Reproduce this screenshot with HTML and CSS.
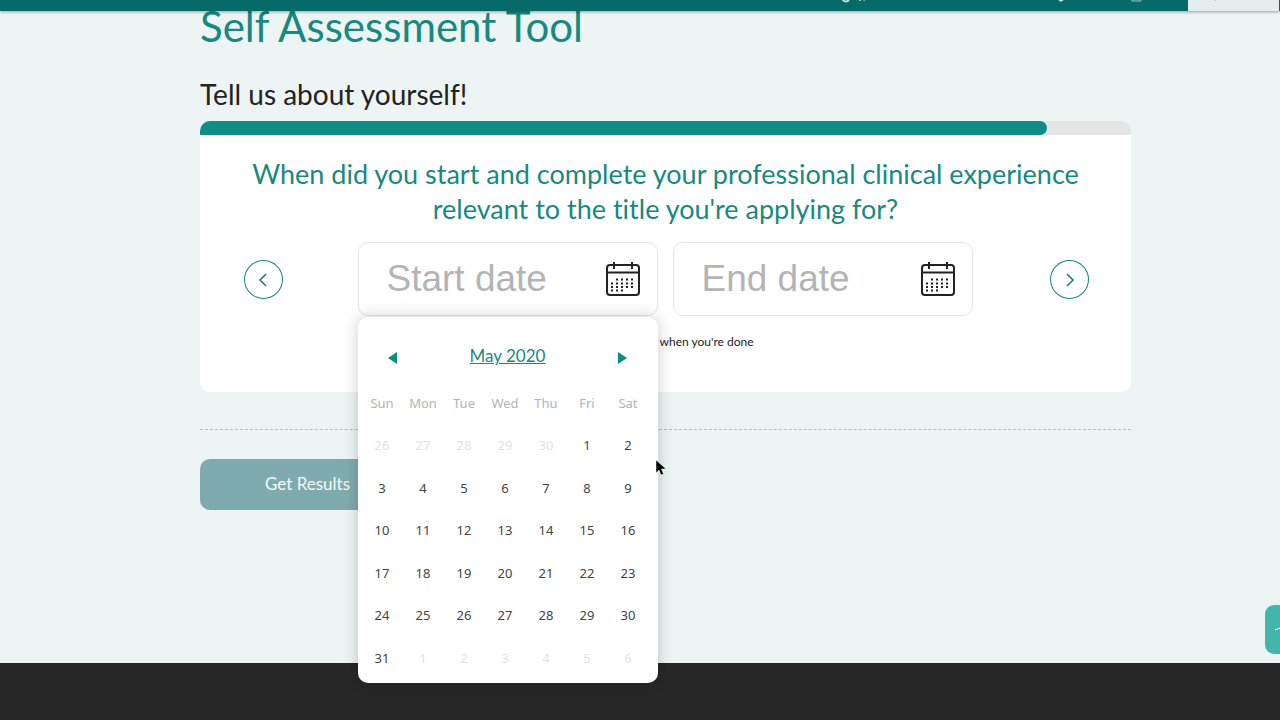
FILE: index.html
```
<!DOCTYPE html>
<html lang="en">
<head>
    <meta charset="UTF-8">
    <meta name="viewport" content="width=device-width, initial-scale=1.0">
    <title>Self Assessment Tool</title>
    <link rel="stylesheet" href="styles.css">
</head>
<body>

    <header class="topbar">
        <svg class="topbar-icons" width="340" height="11" viewBox="0 0 340 11" aria-hidden="true">
            <path d="M2 -3a4 4 0 0 0 7 3" fill="none" stroke="#c5dedc" stroke-width="2"/>
            <path d="M20 -2v3M23 -1l2 1" fill="none" stroke="#9cc8c4" stroke-width="2"/>
            <circle cx="221" cy="-1" r="2.500" fill="#d5ebe9"/>
            <path d="M292 -4v5h9v-5M294 -1h5" fill="none" stroke="#9cc8c4"/>
        </svg>
        <div class="topbar-search">
            <svg width="91" height="11" viewBox="0 0 91 11" aria-hidden="true">
                <path d="M27 -2l1 2" fill="none" stroke="#333" stroke-width="2"/>
            </svg>
        </div>
    </header>

    <main class="page">
        <h1>Self Assessment Tool</h1>
        <h2>Tell us about yourself!</h2>

        <section class="card">
            <div class="progress">
                <div class="progress-bar" style="width: 91%"></div>
            </div>

            <h3>When did you start and complete your professional clinical experience relevant to the title you're applying for?</h3>

            <div class="question">
                <button type="button" class="arrow" aria-label="Previous">
                    <svg width="39" height="39" viewBox="0 0 39 39"><path d="M22 14l-6 6 6 6"/></svg>
                </button>

                <div class="dates">
                    <div class="field">
                        <input type="text" id="startDate" placeholder="Start date" aria-label="Start date">
                        <svg class="calendar-icon" width="34" height="34" viewBox="0 0 34 34" aria-hidden="true">
                            <rect x="1" y="3" width="32" height="30" rx="3"/>
                            <path d="M1 10.500h32M8 0v7M26 0v7"/>
                            <path class="dots" d="M10 17.500h19M5 21.500h24M5 25h24M5 28.500h14"/>
                        </svg>

                        <div class="datepicker">
                            <div class="datepicker-head">
                                <button type="button" aria-label="Previous month"><svg width="9" height="12" viewBox="0 0 9 12"><path d="M9 0v12L0 6z"/></svg></button>
                                <a href="#">May 2020</a>
                                <button type="button" aria-label="Next month"><svg width="9" height="12" viewBox="0 0 9 12"><path d="M0 0v12l9-6z"/></svg></button>
                            </div>
                            <table>
                                <thead>
                                    <tr><th>Sun</th><th>Mon</th><th>Tue</th><th>Wed</th><th>Thu</th><th>Fri</th><th>Sat</th></tr>
                                </thead>
                                <tbody>
                                    <tr><td class="other">26</td><td class="other">27</td><td class="other">28</td><td class="other">29</td><td class="other">30</td><td>1</td><td>2</td></tr>
                                    <tr><td>3</td><td>4</td><td>5</td><td>6</td><td>7</td><td>8</td><td>9</td></tr>
                                    <tr><td>10</td><td>11</td><td>12</td><td>13</td><td>14</td><td>15</td><td>16</td></tr>
                                    <tr><td>17</td><td>18</td><td>19</td><td>20</td><td>21</td><td>22</td><td>23</td></tr>
                                    <tr><td>24</td><td>25</td><td>26</td><td>27</td><td>28</td><td>29</td><td>30</td></tr>
                                    <tr><td>31</td><td class="other">1</td><td class="other">2</td><td class="other">3</td><td class="other">4</td><td class="other">5</td><td class="other">6</td></tr>
                                </tbody>
                            </table>
                            <svg class="pointer" width="12" height="18" viewBox="0 0 12 18" aria-hidden="true">
                                <path d="M1 1v13l3-3 2 5 2.500-1-2-5h4.500z"/>
                            </svg>
                        </div>
                    </div>

                    <div class="field">
                        <input type="text" id="endDate" placeholder="End date" aria-label="End date">
                        <svg class="calendar-icon" width="34" height="34" viewBox="0 0 34 34" aria-hidden="true">
                            <rect x="1" y="3" width="32" height="30" rx="3"/>
                            <path d="M1 10.500h32M8 0v7M26 0v7"/>
                            <path class="dots" d="M10 17.500h19M5 21.500h24M5 25h24M5 28.500h14"/>
                        </svg>
                    </div>
                </div>

                <button type="button" class="arrow" aria-label="Next">
                    <svg width="39" height="39" viewBox="0 0 39 39"><path d="M17 14l6 6-6 6"/></svg>
                </button>
            </div>

            <p class="hint">Click the arrow when you're done</p>
        </section>

        <hr>

        <button type="button" class="results">Get Results</button>
    </main>

    <footer></footer>

    <button type="button" class="side-tab" aria-label="Back to top">
        <svg width="15" height="49" viewBox="0 0 15 49"><path d="M10 25l5-2"/></svg>
    </button>

</body>
</html>
```
FILE: styles.css
```
* {
    box-sizing: border-box;
}
body {
    margin: 0;
    min-height: 100vh;
    display: flex;
    flex-direction: column;
    font-family: Lato, "Noto Sans", sans-serif;
    font-variant-ligatures: none;
    color: #222;
    background: #edf4f4;
    overflow-x: hidden;
}
h1, h2, h3, p {
    margin: 0;
    font-weight: 400;
}
button {
    padding: 0;
    border: 0;
    background: none;
    font-family: inherit;
    cursor: pointer;
}
svg {
    display: block;
}

/* header */
.topbar {
    position: fixed;
    top: 0;
    left: 0;
    right: 0;
    z-index: 10;
    height: 11px;
    display: flex;
    justify-content: flex-end;
    gap: 8px;
    padding-right: 1px;
    background: #066b68;
    box-shadow: 0 1px 3px rgba(0, 0, 0, 0.35);
}
.topbar-search {
    width: 91px;
    background: #e4eeee;
}

/* content */
.page {
    padding: 2px 149px 153px 200px;
}
h1 {
    font-size: 42px;
    line-height: 48px;
    color: #17897f;
}
h2 {
    margin-top: 26px;
    font-size: 28px;
    line-height: 36px;
}
.card {
    margin-top: 9px;
    padding-bottom: 41px;
    background: #fff;
    border-radius: 10px;
}
.progress {
    height: 14px;
    background: #e5e5e5;
    border-radius: 10px 10px 0 0;
    overflow: hidden;
}
.progress-bar {
    height: 14px;
    background: #0d8d85;
    border-radius: 0 7px 7px 0;
}
h3 {
    padding: 21px 44px 0;
    font-size: 27px;
    line-height: 35px;
    text-align: center;
    color: #17897f;
}
.question {
    display: flex;
    align-items: center;
    justify-content: space-between;
    margin-top: 16px;
    padding: 0 42px 0 44px;
}
.arrow {
    width: 39px;
    height: 39px;
    border-radius: 50%;
    box-shadow: inset 0 0 0 1px #17897f;
}
.arrow path {
    fill: none;
    stroke: #17796f;
    stroke-width: 1.5;
}
.dates {
    display: flex;
    gap: 15px;
    margin-right: 3px;
}
.field {
    position: relative;
    display: flex;
    align-items: center;
    width: 300px;
    height: 74px;
    padding: 0 17px 0 28px;
    border: 1px solid #e6e6e6;
    border-radius: 10px;
}
.field input {
    flex: 1;
    min-width: 0;
    padding: 0;
    border: 0;
    outline: 0;
    background: none;
    font-family: "Liberation Sans", Arial, sans-serif;
    font-size: 37px;
}
.field input::placeholder {
    color: #b4b4b4;
}
.calendar-icon {
    fill: none;
    stroke: #222;
    stroke-width: 2;
}
.calendar-icon .dots {
    stroke-dasharray: 2 3;
}
.hint {
    margin-top: 17px;
    font-size: 12px;
    line-height: 18px;
    text-align: center;
}

/* date picker */
.datepicker {
    position: absolute;
    top: 74px;
    left: -1px;
    z-index: 5;
    width: 300px;
    padding: 0 9px 4px 4px;
    background: #fff;
    border-radius: 10px;
    box-shadow: 0 0 16px rgba(0, 0, 0, 0.2);
}
.datepicker-head {
    display: flex;
    align-items: center;
    justify-content: space-between;
    height: 64px;
    padding: 13px 21px 0 26px;
}
.datepicker-head a {
    font-size: 17px;
    color: #17897f;
}
.datepicker-head button {
    padding-top: 5px;
}
.datepicker-head path {
    fill: #0d8d7d;
}
.datepicker table {
    width: 100%;
    height: 298px;
    table-layout: fixed;
    border-collapse: collapse;
    font-family: "Noto Sans", sans-serif;
    font-size: 13px;
    text-align: center;
    color: #444;
}
.datepicker th, .datepicker td {
    padding: 0;
}
.datepicker th {
    height: 43px;
    font-weight: 400;
    color: #b4b4b4;
}
.datepicker td {
    height: 42px;
}
.datepicker .other {
    color: #e2e2e2;
}
.pointer {
    position: absolute;
    top: 142px;
    right: -9px;
    fill: #000;
    stroke: #fff;
    stroke-width: 0.5;
}

hr {
    margin: 37px 0 29px;
    border: 0;
    border-top: 1px dashed #b5bebe;
}
.results {
    width: 215px;
    height: 51px;
    padding-bottom: 2px;
    border-radius: 10px;
    background: #80abae;
    color: #f2fafa;
    font-size: 17px;
}

footer {
    flex: 1;
    min-height: 57px;
    background: #272727;
}
.side-tab {
    position: fixed;
    right: 0;
    bottom: 66px;
    width: 15px;
    height: 49px;
    border-radius: 9px 0 0 9px;
    background: #43b5ac;
}
.side-tab path {
    fill: none;
    stroke: #fff;
}
```
